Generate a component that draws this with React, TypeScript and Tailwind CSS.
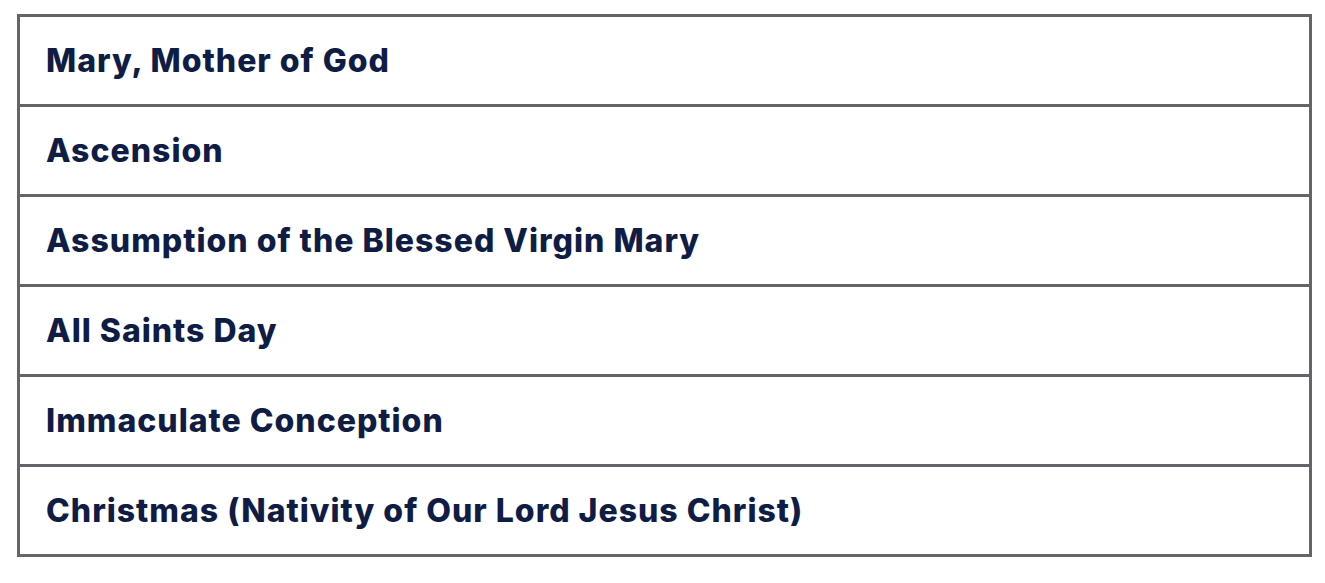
const feasts = [
  "Mary, Mother of God",
  "Ascension",
  "Assumption of the Blessed Virgin Mary",
  "All Saints Day",
  "Immaculate Conception",
  "Christmas (Nativity of Our Lord Jesus Christ)",
];

const App = () => {
  return (
    <div className="min-h-screen bg-white pt-[14px] pl-[17px]">
      <div className="w-[1295px] border-[3px] border-[#63656a]">
        {feasts.map((name, i) => (
          <div
            key={name}
            className={
              i < feasts.length - 1
                ? "flex h-[90px] items-center border-b-[3px] border-[#63656a] pl-[26px]"
                : "flex h-[87px] items-center pl-[26px]"
            }
          >
            <span className="font-['Inter',sans-serif] text-[32px] font-extrabold tracking-[1px] text-[#0f1d45]">
              {name}
            </span>
          </div>
        ))}
      </div>
    </div>
  );
};

export default App;
